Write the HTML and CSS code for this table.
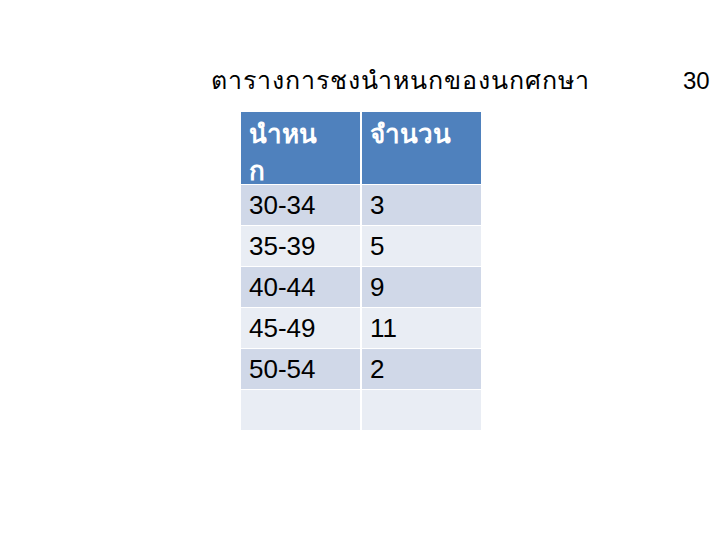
FILE: index.html
```html
<!DOCTYPE html>
<html lang="th">
<head>
<meta charset="utf-8">
<link rel="stylesheet" href="styles.css">
</head>
<body>
<div class="slide">
  <div class="title-row">
    <h1 class="title">ตารางการชงนำหนกของนกศกษา</h1>
    <span class="page-num">30</span>
  </div>
  <div class="table">
    <div class="cell head">นำหน<br>ก</div>
    <div class="cell head">จำนวน</div>
    <div class="cell odd">30-34</div><div class="cell odd">3</div>
    <div class="cell even">35-39</div><div class="cell even">5</div>
    <div class="cell odd">40-44</div><div class="cell odd">9</div>
    <div class="cell even">45-49</div><div class="cell even">11</div>
    <div class="cell odd">50-54</div><div class="cell odd">2</div>
    <div class="cell even"></div><div class="cell even"></div>
  </div>
</div>
</body>
</html>
```
FILE: styles.css
```css
html, body {
  margin: 0;
  padding: 0;
  background: #ffffff;
}
.slide {
  width: 720px;
  height: 540px;
  overflow: hidden;
  font-family: "Liberation Sans", Arial, sans-serif;
  color: #000;
}
.title-row {
  display: flex;
  align-items: baseline;
  padding-top: 64px;
  padding-left: 211px;
}
.title {
  margin: 0;
  font-size: 25px;
  font-weight: normal;
  letter-spacing: 1px;
  line-height: 32px;
  width: 472px;
  white-space: nowrap;
}
.page-num {
  font-size: 24px;
  line-height: 32px;
}
.table {
  display: grid;
  grid-template-columns: 119px 119px;
  grid-template-rows: 72px repeat(6, 40px);
  gap: 1px 2px;
  margin-top: 15px;
  margin-left: 241px;
  width: 240px;
}
.cell {
  font-size: 26px;
  line-height: 41px;
  padding-left: 8px;
}
.head {
  background: #4f81bd;
  color: #ffffff;
  font-weight: bold;
  line-height: 37px;
  padding-top: 4px;
}
.odd {
  background: #d0d8e8;
}
.even {
  background: #e9edf4;
}
```
